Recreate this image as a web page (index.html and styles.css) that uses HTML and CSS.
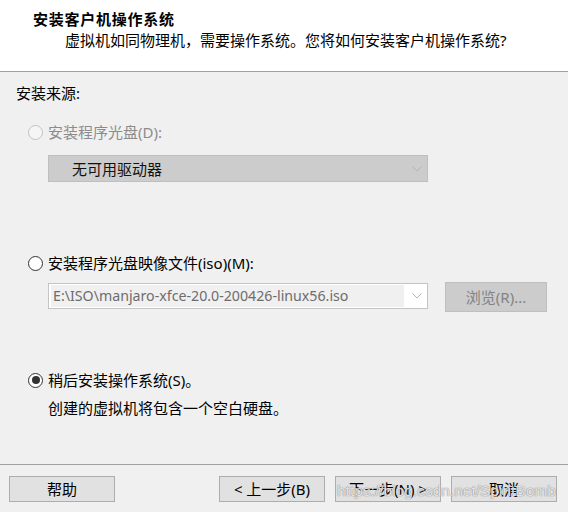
FILE: index.html
```html
<!DOCTYPE html>
<html lang="zh-CN">
<head>
<meta charset="utf-8">
<title>新建虚拟机向导</title>
<link rel="stylesheet" href="styles.css">
</head>
<body>
<div class="dialog">
  <div class="header">
    <div class="title">安装客户机操作系统</div>
    <div class="subtitle">虚拟机如同物理机，需要操作系统。您将如何安装客户机操作系统?</div>
  </div>
  <div class="main">
    <div class="section-label">安装来源:</div>

    <div class="radio-row row-disc disabled">
      <span class="radio"></span>
      <span class="label">安装程序光盘(D):</span>
    </div>
    <div class="combo combo-disabled">
      <span class="combo-text">无可用驱动器</span>
      <svg class="chev" width="10" height="6" viewBox="0 0 10 6"><polyline points="0.5,0.5 5,5 9.5,0.5" fill="none" stroke="#b4b4b4" stroke-width="1"/></svg>
    </div>

    <div class="radio-row row-iso">
      <span class="radio"></span>
      <span class="label">安装程序光盘映像文件(iso)(M):</span>
    </div>
    <div class="iso-row">
      <div class="combo combo-iso">
        <span class="iso-field">E:\ISO\manjaro-xfce-20.0-200426-linux56.iso</span>
        <svg class="chev" width="10" height="6" viewBox="0 0 10 6"><polyline points="0.5,0.5 5,5 9.5,0.5" fill="none" stroke="#b4b4b4" stroke-width="1"/></svg>
      </div>
      <div class="btn btn-disabled browse">浏览(R)...</div>
    </div>

    <div class="radio-row row-later">
      <span class="radio checked"></span>
      <span class="label">稍后安装操作系统(S)。</span>
    </div>
    <div class="desc">创建的虚拟机将包含一个空白硬盘。</div>
  </div>
  <div class="footer">
    <div class="btn">帮助</div>
    <div class="btn-group">
      <div class="btn">&lt; 上一步(B)</div>
      <div class="btn">下一步(N) &gt;</div>
      <div class="btn">取消</div>
    </div>
    <div class="watermark">https://blog.csdn.net/SpiritBomb</div>
  </div>
</div>
</body>
</html>
```

FILE: styles.css
```css
* { box-sizing: border-box; }

html, body {
  margin: 0;
  padding: 0;
  background: #f0f0f0;
}

body {
  font-family: "Noto Sans", "Noto Sans CJK SC", sans-serif;
  font-size: 15px;
  line-height: 20px;
  color: #000;
}

.dialog {
  width: 568px;
  height: 512px;
  display: flex;
  flex-direction: column;
  position: relative;
  overflow: hidden;
}

.header {
  height: 72px;
  background: #fff;
  border-bottom: 1px solid #a0a0a0;
  padding-top: 9px;
  flex: none;
}

.title {
  padding-left: 33px;
  font-weight: bold;
  letter-spacing: 0.75px;
  line-height: 20px;
}

.subtitle {
  padding-left: 65px;
  margin-top: 1px;
  line-height: 20px;
}

.main {
  flex: 1;
  padding-left: 16px;
  padding-top: 11px;
}

.section-label {
  line-height: 20px;
}

.radio-row {
  display: flex;
  align-items: center;
  height: 20px;
  margin-left: 12px;
}

.row-disc { margin-top: 19px; }
.row-iso { margin-top: 71px; }
.row-later { margin-top: 58px; }

.radio {
  width: 15px;
  height: 15px;
  border-radius: 50%;
  border: 1px solid #333;
  background: #fff;
  margin-right: 5px;
  flex: none;
  position: relative;
}

.radio.checked::after {
  content: "";
  position: absolute;
  left: 2.5px;
  top: 2.5px;
  width: 8px;
  height: 8px;
  border-radius: 50%;
  background: #333;
}

.disabled .radio {
  border-color: #c2c2c2;
  background: #f5f5f5;
}

.disabled .label {
  color: #8c8c8c;
}

.combo {
  width: 380px;
  margin-left: 32px;
  display: flex;
  align-items: center;
  justify-content: space-between;
}

.combo-disabled {
  height: 27px;
  margin-top: 13px;
  background: #cccccc;
  border: 1px solid #bfbfbf;
  padding-left: 23px;
  padding-right: 5px;
}

.combo-text {
  color: #111;
}

.chev {
  display: block;
  flex: none;
}

.iso-row {
  display: flex;
  align-items: flex-start;
  margin-top: 9px;
  height: 30px;
}

.combo-iso {
  height: 26px;
  margin-top: 1px;
  background: #fff;
  border: 1px solid #c4c4c4;
  padding: 1px 5px 1px 2px;
}

.iso-field {
  width: 353px;
  height: 22px;
  line-height: 22px;
  font-size: 14.2px;
  background: #f0f0f0;
  color: #6d6d6d;
  padding-left: 2px;
  white-space: nowrap;
  overflow: hidden;
}

.btn {
  width: 106px;
  height: 26px;
  background: #e1e1e1;
  border: 1px solid #adadad;
  display: flex;
  align-items: center;
  justify-content: center;
  line-height: 20px;
  flex: none;
}

.btn-disabled {
  background: #cccccc;
  border-color: #bfbfbf;
  color: #838383;
}

.browse {
  width: 102px;
  height: 30px;
  margin-left: 17px;
}

.desc {
  margin-left: 32px;
  margin-top: 8px;
  line-height: 20px;
}

.footer {
  flex: none;
  height: 48px;
  border-top: 1px solid #a0a0a0;
  padding: 11px 11px 0 9px;
  display: flex;
  align-items: flex-start;
  justify-content: space-between;
  position: relative;
}

.btn-group {
  display: flex;
  gap: 10px;
}

.watermark {
  position: absolute;
  left: 337px;
  top: 17px;
  font-family: "Liberation Sans", Arial, sans-serif;
  font-size: 15.5px;
  line-height: 18px;
  color: rgba(255, 255, 255, 0.8);
  text-shadow: 0 0 1px rgba(90, 90, 90, 0.7), 0 0 1px rgba(90, 90, 90, 0.5);
  white-space: nowrap;
  pointer-events: none;
}
```
